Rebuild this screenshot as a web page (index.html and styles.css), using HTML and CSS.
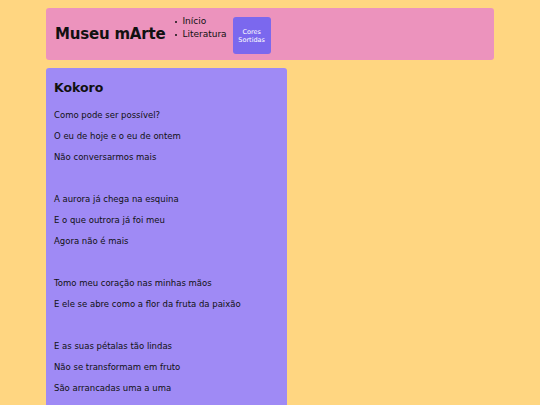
FILE: index.html
```html
<!DOCTYPE html>
<html lang="pt-BR">
<head>
<meta charset="utf-8">
<title>Museu mArte</title>
<link rel="stylesheet" href="styles.css">
</head>
<body>
<div class="page">
  <header class="header">
    <h1 class="brand">Museu mArte</h1>
    <ul class="nav">
      <li>Início</li>
      <li>Literatura</li>
    </ul>
    <button class="color-btn">Cores Sortidas</button>
  </header>
  <main class="content">
    <article class="card">
      <h2 class="card-title">Kokoro</h2>
      <p>Como pode ser possível?</p>
      <p>O eu de hoje e o eu de ontem</p>
      <p>Não conversarmos mais</p>
      <p class="blank">&nbsp;</p>
      <p>A aurora já chega na esquina</p>
      <p>E o que outrora já foi meu</p>
      <p>Agora não é mais</p>
      <p class="blank">&nbsp;</p>
      <p>Tomo meu coração nas minhas mãos</p>
      <p>E ele se abre como a flor da fruta da paixão</p>
      <p class="blank">&nbsp;</p>
      <p>E as suas pétalas tão lindas</p>
      <p>Não se transformam em fruto</p>
      <p>São arrancadas uma a uma</p>
    </article>
  </main>
</div>
</body>
</html>
```

FILE: styles.css
```css
html, body {
  margin: 0;
  padding: 0;
}
body {
  background: #ffd681;
  font-family: "Comic Sans MS", "DejaVu Sans", sans-serif;
  color: #111;
}
.page {
  width: 448px;
  margin: 0 auto;
  padding-top: 8px;
}
.header {
  background: #ec93bd;
  border-radius: 3px;
  height: 52px;
  box-sizing: border-box;
  padding: 0 9px;
  display: flex;
  align-items: center;
}
.brand {
  margin: 0;
  font-size: 15px;
  font-weight: bold;
  letter-spacing: -0.2px;
}
.nav {
  list-style: none;
  margin: 0 0 12px 10px;
  padding: 0;
  font-size: 9px;
  line-height: 13px;
}
.nav li::before {
  content: "";
  display: inline-block;
  width: 2px;
  height: 2px;
  border-radius: 50%;
  background: #111;
  vertical-align: middle;
  margin-right: 5px;
}
.color-btn {
  margin-left: 6px;
  width: 38px;
  height: 37px;
  background: #7b68ee;
  border: none;
  border-radius: 3px;
  color: #fff;
  font-family: inherit;
  font-size: 6.5px;
  line-height: 8px;
  padding: 0 3px;
  margin-top: 3px;
}
.content {
  margin-top: 8px;
}
.card {
  width: 241px;
  box-sizing: border-box;
  background: #9f8af5;
  border-radius: 3px;
  padding: 10px 8px 20px;
}
.card-title {
  margin: 0 0 11px;
  font-size: 12.5px;
  font-weight: bold;
  line-height: 20px;
}
.card p {
  margin: 0 0 9px;
  font-size: 8.5px;
  line-height: 12px;
}
```
